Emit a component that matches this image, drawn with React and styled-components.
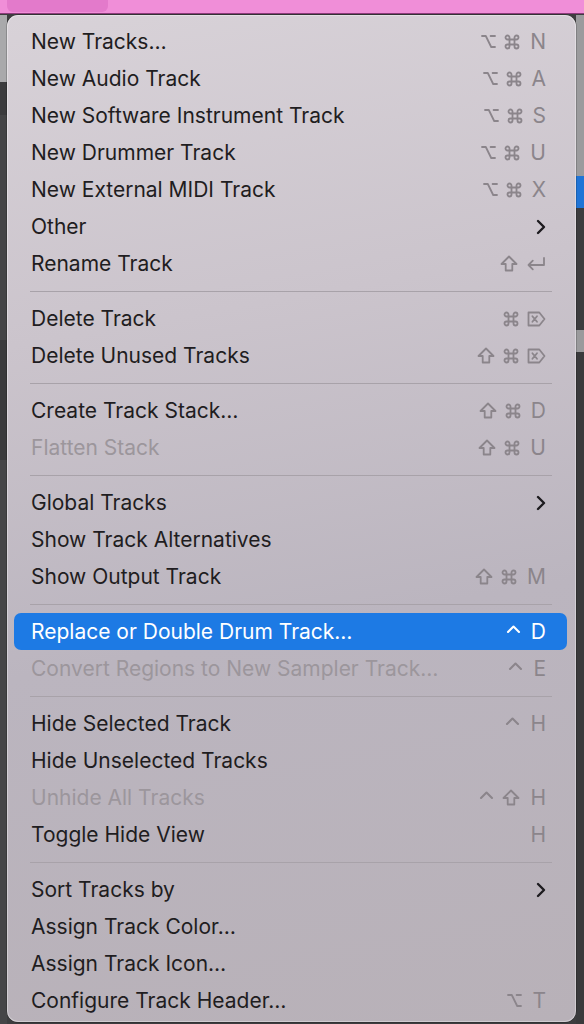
import React from 'react';
import styled, { createGlobalStyle } from 'styled-components';

const GlobalStyle = createGlobalStyle`
  html, body {
    margin: 0;
    padding: 0;
  }
  body {
    width: 584px;
    height: 1024px;
    overflow: hidden;
    font-family: Inter, "Noto Sans", sans-serif;
    background:
      linear-gradient(to bottom,
        transparent 0, transparent 15px,
        #a9a9ab 15px, #a9a9ab 82px,
        #3b3b3d 82px, #3b3b3d 115px,
        #444446 115px, #444446 340px,
        #3a3a3c 340px, #3a3a3c 460px,
        #454547 460px, #454547 1024px) left / 7px 100% no-repeat,
      linear-gradient(to bottom,
        transparent 0, transparent 15px,
        #9b9b9d 15px, #9b9b9d 176px,
        #1f74d6 176px, #1f74d6 208px,
        #3c3c3e 208px, #3c3c3e 330px,
        #9a9a9c 330px, #9a9a9c 352px,
        #3a3a3c 352px, #3a3a3c 1024px) right / 8px 100% no-repeat,
      #3d3d3f;
  }
`;

const Page = styled.div`
  display: flex;
  flex-direction: column;
  height: 1024px;
`;

const TopBar = styled.div`
  height: 13px;
  background: #f08ed8;
  border-bottom: 1px solid #8c3b7b;
  display: flex;
  padding-left: 7px;
`;

const Tab = styled.div`
  width: 101px;
  height: 12px;
  background: #e37acb;
  border-radius: 0 0 6px 6px;
`;

const Menu = styled.div`
  margin: 1px 8px 0 7px;
  height: 1007px;
  box-sizing: border-box;
  padding: 8px 9px 0 7px;
  border-radius: 11px;
  background: linear-gradient(170deg, #d8d2d8 0%, #cbc4cc 30%, #bbb5bf 60%, #b8b1b8 100%);
  box-shadow: inset 0 0 0 1px rgba(255, 255, 255, 0.35), 0 0 0 0.5px rgba(0, 0, 0, 0.35);
  display: flex;
  flex-direction: column;
`;

const Row = styled.div`
  height: 37px;
  display: flex;
  align-items: center;
  justify-content: space-between;
  padding: 0 21px 0 17px;
  border-radius: 7px;
  font-size: 21px;
  color: ${p => (p.$active ? '#ffffff' : p.$disabled ? '#9c969c' : '#1f1d21')};
  background: ${p => (p.$active ? '#1d7ae4' : 'transparent')};
`;

const Separator = styled.div`
  height: 18px;
  display: flex;
  align-items: center;
  padding: 0 15px 0 16px;
  &::after {
    content: '';
    flex: 1;
    height: 1px;
    background: #a8a2a9;
  }
`;

const Keys = styled.span`
  display: flex;
  align-items: center;
  gap: 8px;
  color: ${p => (p.$active ? '#ffffff' : '#8b858b')};
`;

const KeyLetter = styled.span`
  margin-left: 2px;
  font-size: 21px;
  line-height: 1;
`;

const Glyph = styled.svg`
  display: block;
  fill: none;
  stroke: currentColor;
  stroke-width: 1.8;
  stroke-linejoin: round;
  stroke-linecap: round;
`;

const icons = {
  opt: (
    <Glyph width="15" height="15" viewBox="0 0 15 15">
      <path d="M1 2 H4.8 L10.2 13 H14 M9.6 2 H14" />
    </Glyph>
  ),
  cmd: (
    <Glyph width="16" height="16" viewBox="0 0 16 16">
      <path d="M5.5 10.5 V12.5 A2 2 0 1 1 3.5 10.5 H12.5 A2 2 0 1 1 10.5 12.5 V3.5 A2 2 0 1 1 12.5 5.5 H3.5 A2 2 0 1 1 5.5 3.5 Z" />
    </Glyph>
  ),
  shift: (
    <Glyph width="18" height="17" viewBox="0 0 18 17">
      <path d="M9 1.5 L16.5 9 H12.3 V15.5 H5.7 V9 H1.5 Z" />
    </Glyph>
  ),
  ctrl: (
    <Glyph width="15" height="16" viewBox="0 0 15 16" style={{ strokeWidth: 2.1 }}>
      <path d="M2 8 L7.5 2.5 L13 8" />
    </Glyph>
  ),
  ret: (
    <Glyph width="20" height="16" viewBox="0 0 20 16">
      <path d="M18 2 V9 H2.5 M6.8 4.7 L2.5 9 L6.8 13.3" />
    </Glyph>
  ),
  del: (
    <Glyph width="19" height="16" viewBox="0 0 19 16">
      <path d="M1.5 1.5 H12.3 L17.5 8 L12.3 14.5 H1.5 Z M5.4 5.2 L10 10.8 M10 5.2 L5.4 10.8" />
    </Glyph>
  ),
};

const Chevron = () => (
  <Glyph width="10" height="16" viewBox="0 0 10 16" style={{ stroke: '#1d1b1f', strokeWidth: 2.4 }}>
    <path d="M2 2 L8 8 L2 14" />
  </Glyph>
);

const sections = [
  [
    { label: 'New Tracks…', keys: ['opt', 'cmd', 'N'] },
    { label: 'New Audio Track', keys: ['opt', 'cmd', 'A'] },
    { label: 'New Software Instrument Track', keys: ['opt', 'cmd', 'S'] },
    { label: 'New Drummer Track', keys: ['opt', 'cmd', 'U'] },
    { label: 'New External MIDI Track', keys: ['opt', 'cmd', 'X'] },
    { label: 'Other', sub: true },
    { label: 'Rename Track', keys: ['shift', 'ret'] },
  ],
  [
    { label: 'Delete Track', keys: ['cmd', 'del'] },
    { label: 'Delete Unused Tracks', keys: ['shift', 'cmd', 'del'] },
  ],
  [
    { label: 'Create Track Stack…', keys: ['shift', 'cmd', 'D'] },
    { label: 'Flatten Stack', keys: ['shift', 'cmd', 'U'], disabled: true },
  ],
  [
    { label: 'Global Tracks', sub: true },
    { label: 'Show Track Alternatives' },
    { label: 'Show Output Track', keys: ['shift', 'cmd', 'M'] },
  ],
  [
    { label: 'Replace or Double Drum Track…', keys: ['ctrl', 'D'], active: true },
    { label: 'Convert Regions to New Sampler Track…', keys: ['ctrl', 'E'], disabled: true },
  ],
  [
    { label: 'Hide Selected Track', keys: ['ctrl', 'H'] },
    { label: 'Hide Unselected Tracks' },
    { label: 'Unhide All Tracks', keys: ['ctrl', 'shift', 'H'], disabled: true },
    { label: 'Toggle Hide View', keys: ['H'] },
  ],
  [
    { label: 'Sort Tracks by', sub: true },
    { label: 'Assign Track Color…' },
    { label: 'Assign Track Icon…' },
    { label: 'Configure Track Header…', keys: ['opt', 'T'] },
  ],
];

const MenuItem = ({ item }) => (
  <Row $active={item.active} $disabled={item.disabled}>
    <span>{item.label}</span>
    {item.sub && <Chevron />}
    {item.keys && (
      <Keys $active={item.active}>
        {item.keys.map((k, i) =>
          icons[k] ? <React.Fragment key={i}>{icons[k]}</React.Fragment> : <KeyLetter key={i}>{k}</KeyLetter>
        )}
      </Keys>
    )}
  </Row>
);

const App = () => {
  return (
    <Page>
      <GlobalStyle />
      <TopBar>
        <Tab />
      </TopBar>
      <Menu>
        {sections.map((section, si) => (
          <React.Fragment key={si}>
            {si > 0 && <Separator />}
            {section.map(item => (
              <MenuItem key={item.label} item={item} />
            ))}
          </React.Fragment>
        ))}
      </Menu>
    </Page>
  );
};

export default App;
